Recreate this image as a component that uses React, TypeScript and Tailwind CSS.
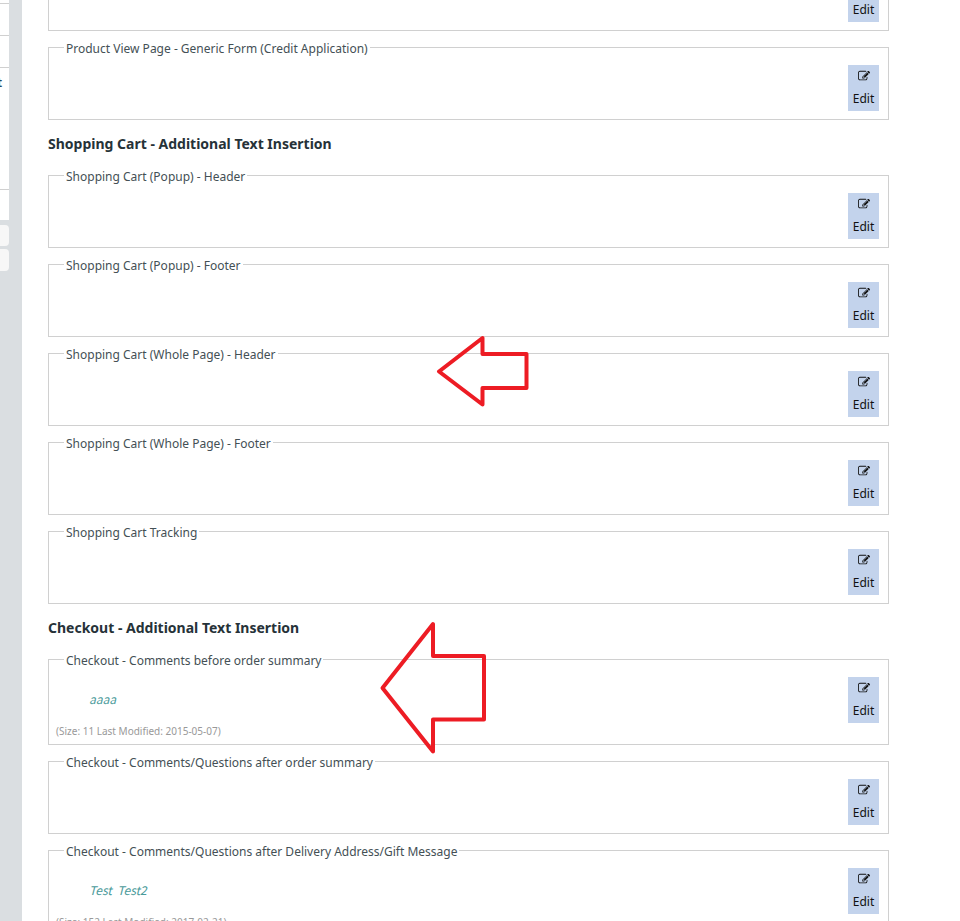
import React from "react";

interface TextBlock {
  id: string;
  title: string;
  content?: string;
  info?: string;
}

interface Section {
  id: string;
  heading?: string;
  blocks: TextBlock[];
}

const sections: Section[] = [
  {
    id: "product",
    blocks: [
      { id: "product-previous", title: "" },
      { id: "product-credit", title: "Product View Page - Generic Form (Credit Application)" },
    ],
  },
  {
    id: "cart",
    heading: "Shopping Cart - Additional Text Insertion",
    blocks: [
      { id: "popup-header", title: "Shopping Cart (Popup) - Header" },
      { id: "popup-footer", title: "Shopping Cart (Popup) - Footer" },
      { id: "page-header", title: "Shopping Cart (Whole Page) - Header" },
      { id: "page-footer", title: "Shopping Cart (Whole Page) - Footer" },
      { id: "tracking", title: "Shopping Cart Tracking" },
    ],
  },
  {
    id: "checkout",
    heading: "Checkout - Additional Text Insertion",
    blocks: [
      {
        id: "before-summary",
        title: "Checkout - Comments before order summary",
        content: "aaaa",
        info: "(Size: 11 Last Modified: 2015-05-07)",
      },
      { id: "after-summary", title: "Checkout - Comments/Questions after order summary" },
      {
        id: "after-address",
        title: "Checkout - Comments/Questions after Delivery Address/Gift Message",
        content: "Test  Test2",
        info: "(Size: 152 Last Modified: 2017-02-21)",
      },
    ],
  },
];

const EditIcon: React.FC = () => (
  <svg viewBox="0 0 1792 1792" className="size-3" fill="currentColor" aria-hidden="true">
    <path d="M888 1184l116-116-152-152-116 116v56h96v96h56zm440-720q-16-16-33 1l-350 350q-17 17-1 33t33-1l350-350q17-17 1-33zm80 594v190q0 119-84.5 203.5t-203.5 84.5h-832q-119 0-203.5-84.5t-84.5-203.5v-832q0-119 84.5-203.5t203.5-84.5h832q63 0 117 25 15 7 18 23 3 17-9 29l-49 49q-14 14-32 8-23-6-45-6h-832q-66 0-113 47t-47 113v832q0 66 47 113t113 47h832q66 0 113-47t47-113v-126q0-13 9-22l64-64q15-15 35-7t20 29zm-96-738l288 288-672 672h-288v-288zm444 132l-92 92-288-288 92-92q28-28 68-28t68 28l152 152q28 28 28 68t-28 68z" />
  </svg>
);

const TextBlockCard: React.FC<{ block: TextBlock }> = ({ block }) => (
  <fieldset className="min-w-0 border border-[#d0d0d0] pr-[9px] pl-[7px]">
    <legend className="ml-2 h-[17px] px-[2px] text-xs leading-5 text-[#445055]">{block.title}</legend>
    <div className="flex items-start justify-between pt-[9px]">
      <div>
        {block.content && (
          <p className="mt-3 mb-[14px] ml-[33px] font-['Noto_Sans_CJK_SC',sans-serif] text-xs leading-[19px] whitespace-pre text-[#4a9a9a] italic">
            {block.content}
          </p>
        )}
        {block.info && <p className="mb-1 text-[10px] leading-[18px] text-[#999999]">{block.info}</p>}
      </div>
      <button
        type="button"
        className="mb-2 flex h-[46px] w-[31px] flex-col items-center justify-between bg-[#c3d3ec] pt-[5px] pb-[3px] text-xs leading-[18px] text-[#111111]"
      >
        <EditIcon />
        <span>Edit</span>
      </button>
    </div>
  </fieldset>
);

const Sidebar: React.FC = () => (
  <aside className="w-[22px] shrink-0 overflow-hidden bg-[#dadee1] pr-[13px]">
    {/* Menu rows */}
    <div className="h-[3px] bg-white" />
    <div className="h-8 border-t border-[#d0d0d0] bg-white" />
    <div className="h-8 border-t border-[#d0d0d0] bg-white" />
    <div className="flex h-[122px] justify-end border-t border-[#d0d0d0] bg-white pt-[6px] pr-[7px] text-xs leading-[18px] font-semibold text-[#24485c]">
      t
    </div>
    <div className="h-[31px] border-t border-[#d0d0d0] bg-white" />
    {/* Bottom buttons */}
    <div className="mt-[5px] h-[21px] rounded-r bg-[#f7f7f7]" />
    <div className="mt-[3px] h-[22px] rounded-r bg-[#f7f7f7]" />
  </aside>
);

const App: React.FC = () => {
  return (
    <div className="relative flex h-screen overflow-hidden bg-white font-['Noto_Sans',sans-serif]">
      <Sidebar />
      <main className="-mt-[50px] mr-[71px] ml-[26px] flex min-w-0 flex-1 flex-col gap-2">
        {sections.map((section) => (
          <section key={section.id} className="flex flex-col gap-2">
            {section.heading && (
              <h2 className="pt-1 pb-[3px] text-sm leading-6 font-bold text-[#263238]">{section.heading}</h2>
            )}
            {section.blocks.map((block) => (
              <TextBlockCard key={block.id} block={block} />
            ))}
          </section>
        ))}
      </main>

      {/* Arrow annotations */}
      <svg
        className="pointer-events-none absolute top-[330px] left-[430px] h-20 w-[110px]"
        viewBox="430 330 110 80"
        fill="none"
        stroke="#ed1c24"
        strokeWidth="4"
        strokeLinejoin="round"
      >
        <path d="M439 371.5L482.5 338V354H526.5V388H482.5V404.5Z" />
      </svg>
      <svg
        className="pointer-events-none absolute top-[615px] left-[370px] h-[145px] w-[130px]"
        viewBox="370 615 130 145"
        fill="none"
        stroke="#ed1c24"
        strokeWidth="4"
        strokeLinejoin="round"
      >
        <path d="M382.5 688L433 624V656H484V719.5H433V751.5Z" />
      </svg>
    </div>
  );
};

export default App;
